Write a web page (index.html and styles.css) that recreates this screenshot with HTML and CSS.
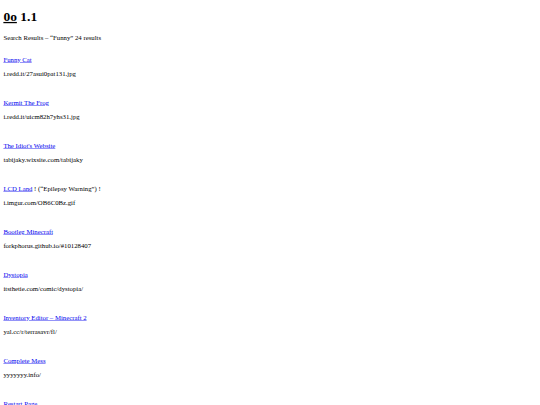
FILE: index.html
```html
<!DOCTYPE html>
<html lang="en">
<head>
  <meta charset="UTF-8" />
  <title>0o 1.1</title>
  <link rel="stylesheet" href="styles.css">
</head>
<body>
  <h1><u>0o</u> 1.1</h1>
  <p class="summary">Search Results – “Funny” 24 results</p>

  <div class="result">
    <p><a href="#">Funny Cat</a></p>
    <p>i.redd.it/27asui0pat131.jpg</p>
  </div>
  <div class="result">
    <p><a href="#">Kermit The Frog</a></p>
    <p>i.redd.it/uicm82h7yhs31.jpg</p>
  </div>
  <div class="result">
    <p><a href="#">The Idiot's Website</a></p>
    <p>tabijaky.wixsite.com/tabijaky</p>
  </div>
  <div class="result">
    <p><a href="#">LCD Land</a> ! (“Epilepsy Warning”) !</p>
    <p>i.imgur.com/OB6C0Bz.gif</p>
  </div>
  <div class="result">
    <p><a href="#">Bootleg Minecraft</a></p>
    <p>forkphorus.github.io/#10128407</p>
  </div>
  <div class="result">
    <p><a href="#">Dystopia</a></p>
    <p>itsthetie.com/comic/dystopia/</p>
  </div>
  <div class="result">
    <p><a href="#">Inventory Editor – Minecraft 2</a></p>
    <p>yal.cc/r/terrasavr/fl/</p>
  </div>
  <div class="result">
    <p><a href="#">Complete Mess</a></p>
    <p>yyyyyyy.info/</p>
  </div>
  <div class="result">
    <p><a href="#">Restart Page</a></p>
  </div>
</body>
</html>
```

FILE: styles.css
```css
html {
  height: 100%;
  overflow: hidden;
  background: #fff;
}

/* page is a 1280x960 layout shrunk to the 540 wide window */
body {
  box-sizing: border-box;
  width: 1280px;
  height: 960px;
  margin: 0;
  padding: 0 8px;
  overflow: hidden;
  transform: scale(0.421875);
  transform-origin: 0 0;
  font-family: 'Liberation Serif', serif;
  font-size: 16px;
  color: #000;
}

a {
  color: #00e;
}

.summary {
  margin-bottom: 34px;
}

/* empty line after each result */
.result {
  padding-bottom: 18px;
}
```
